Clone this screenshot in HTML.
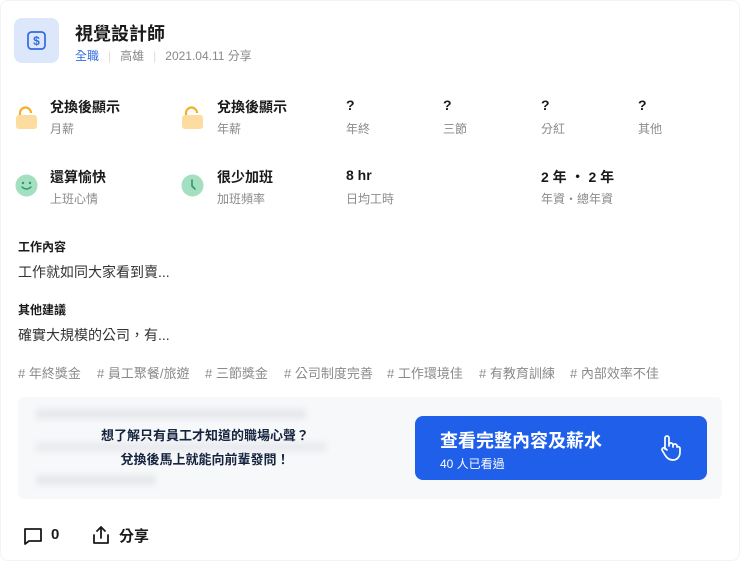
<!DOCTYPE html>
<html><head><meta charset="utf-8"><style>
*{margin:0;padding:0;box-sizing:border-box}
body{width:740px;height:561px;background:#fff;font-family:"Liberation Sans","Noto Sans CJK TC",sans-serif;color:#1a1a1a;position:relative;overflow:hidden}
.a{position:absolute;white-space:nowrap}
.t{font-size:14px;font-weight:700;color:#1a1a1a}
.s{font-size:12px;color:#8a8a8a}
.g{position:absolute;white-space:nowrap;top:363px;font-size:13px;color:#8a8a8a}
.card{position:absolute;left:0;top:0;width:740px;height:561px;border:1px solid #f3f3f3;border-radius:8px}
</style></head><body>
<div class="card"></div>
<div class="a" style="left:14px;top:18px;width:45px;height:45px;background:#dce7fb;border-radius:8px"></div>
<svg class="a" style="left:26px;top:30px" width="21" height="21" viewBox="0 0 21 21"><rect x="2" y="2" width="17" height="17" rx="3.5" fill="none" stroke="#2f6be0" stroke-width="1.7"/><text x="10.5" y="15" font-size="12" font-weight="700" fill="#2f6be0" text-anchor="middle" font-family="Liberation Sans">$</text></svg>
<div class="a" style="left:75px;top:20px;font-size:18px;font-weight:700">視覺設計師</div>
<div class="a" style="left:75px;top:47px;font-size:12px;color:#888"><span style="color:#2f6be0">全職</span><span style="color:#ddd;margin:0 9px">|</span>高雄<span style="color:#ddd;margin:0 9px">|</span>2021.04.11 分享</div>

<svg class="a" style="left:15px;top:104px" width="23" height="25"><path d="M5 12V9a5.5 5.5 0 0 1 11 0" fill="none" stroke="#f4ae2a" stroke-width="2.2"/><rect x="1" y="11" width="21" height="14" rx="3" fill="#fddca0"/></svg>
<svg class="a" style="left:181px;top:104px" width="23" height="25"><path d="M5 12V9a5.5 5.5 0 0 1 11 0" fill="none" stroke="#f4ae2a" stroke-width="2.2"/><rect x="1" y="11" width="21" height="14" rx="3" fill="#fddca0"/></svg>
<div class="a t" style="left:50px;top:97px">兌換後顯示</div><div class="a s" style="left:50px;top:120px">月薪</div>
<div class="a t" style="left:217px;top:97px">兌換後顯示</div><div class="a s" style="left:217px;top:120px">年薪</div>
<div class="a t" style="left:346px;top:97px">?</div><div class="a s" style="left:346px;top:120px">年終</div>
<div class="a t" style="left:443px;top:97px">?</div><div class="a s" style="left:443px;top:120px">三節</div>
<div class="a t" style="left:541px;top:97px">?</div><div class="a s" style="left:541px;top:120px">分紅</div>
<div class="a t" style="left:638px;top:97px">?</div><div class="a s" style="left:638px;top:120px">其他</div>

<svg class="a" style="left:15px;top:174px" width="23" height="23"><circle cx="11.5" cy="11.5" r="11" fill="#a3dfc0"/><circle cx="8" cy="9" r="1.2" fill="#2a9a66"/><circle cx="15" cy="9" r="1.2" fill="#2a9a66"/><path d="M7 13q4.5 4 9 0" fill="none" stroke="#2a9a66" stroke-width="1.5" stroke-linecap="round"/></svg>
<svg class="a" style="left:181px;top:174px" width="23" height="23"><circle cx="11.5" cy="11.5" r="11" fill="#a3dfc0"/><path d="M11 6v6l3 3" fill="none" stroke="#2a9a66" stroke-width="1.6" stroke-linecap="round"/></svg>
<div class="a t" style="left:50px;top:167px">還算愉快</div><div class="a s" style="left:50px;top:190px">上班心情</div>
<div class="a t" style="left:217px;top:167px">很少加班</div><div class="a s" style="left:217px;top:190px">加班頻率</div>
<div class="a t" style="left:346px;top:167px">8 hr</div><div class="a s" style="left:346px;top:190px">日均工時</div>
<div class="a t" style="left:541px;top:167px">2 年 ・ 2 年</div><div class="a s" style="left:541px;top:190px">年資・總年資</div>

<div class="a" style="left:18px;top:238px;font-size:12px;font-weight:700">工作內容</div>
<div class="a" style="left:18px;top:262px;font-size:14px;color:#333">工作就如同大家看到賣...</div>
<div class="a" style="left:18px;top:301px;font-size:12px;font-weight:700">其他建議</div>
<div class="a" style="left:18px;top:325px;font-size:14px;color:#333">確實大規模的公司，有...</div>
<div class="g" style="left:18px"># 年終獎金</div>
<div class="g" style="left:97px"># 員工聚餐/旅遊</div>
<div class="g" style="left:205px"># 三節獎金</div>
<div class="g" style="left:284px"># 公司制度完善</div>
<div class="g" style="left:387px"># 工作環境佳</div>
<div class="g" style="left:479px"># 有教育訓練</div>
<div class="g" style="left:570px"># 內部效率不佳</div>

<div class="a" style="left:18px;top:397px;width:704px;height:102px;background:#f7f8fa;border-radius:6px;overflow:hidden">
<div class="a" style="left:18px;top:12px;width:270px;height:10px;background:#e6e8ec;filter:blur(3px)"></div>
<div class="a" style="left:18px;top:45px;width:290px;height:10px;background:#e9ebef;filter:blur(3px)"></div>
<div class="a" style="left:18px;top:78px;width:120px;height:10px;background:#e6e8ec;filter:blur(3px)"></div>
</div>
<div class="a" style="left:70px;top:424px;width:270px;text-align:center;font-size:13px;font-weight:700;color:#16243f;line-height:24px">想了解只有員工才知道的職場心聲？<br>兌換後馬上就能向前輩發問！</div>
<div class="a" style="left:415px;top:416px;width:292px;height:64px;background:#1f5fe9;border-radius:8px"></div>
<div class="a" style="left:440px;top:427px;font-size:18px;font-weight:700;color:#fff">查看完整內容及薪水</div>
<div class="a" style="left:440px;top:455px;font-size:12px;color:#fff">40 人已看過</div>
<svg class="a" style="left:657px;top:434px" width="26" height="28" viewBox="0 0 26 28"><path d="M8 15V4a2 2 0 0 1 4 0v8m0-1a2 2 0 0 1 4 0v2m0-1a2 2 0 0 1 4 0v1m0 0a2 2 0 0 1 3 1v4c0 5-3 8-7 8s-6-2-8-5l-3-5a2 2 0 0 1 3-2l2 2" fill="none" stroke="#fff" stroke-width="1.7" stroke-linecap="round" stroke-linejoin="round"/></svg>

<svg class="a" style="left:22px;top:525px" width="22" height="22"><path d="M3 4h16v12H7l-4 3z" fill="none" stroke="#1a1a1a" stroke-width="1.8" stroke-linejoin="round"/></svg>
<div class="a" style="left:51px;top:526px;font-size:15px;font-weight:700;line-height:18px">0</div>
<svg class="a" style="left:90px;top:524px" width="22" height="22"><path d="M11 14V3M7 7l4-4 4 4M4 11v8h14v-8" fill="none" stroke="#1a1a1a" stroke-width="1.8" stroke-linecap="round" stroke-linejoin="round"/></svg>
<div class="a" style="left:119px;top:525px;font-size:15px;font-weight:700">分享</div>
</body></html>
